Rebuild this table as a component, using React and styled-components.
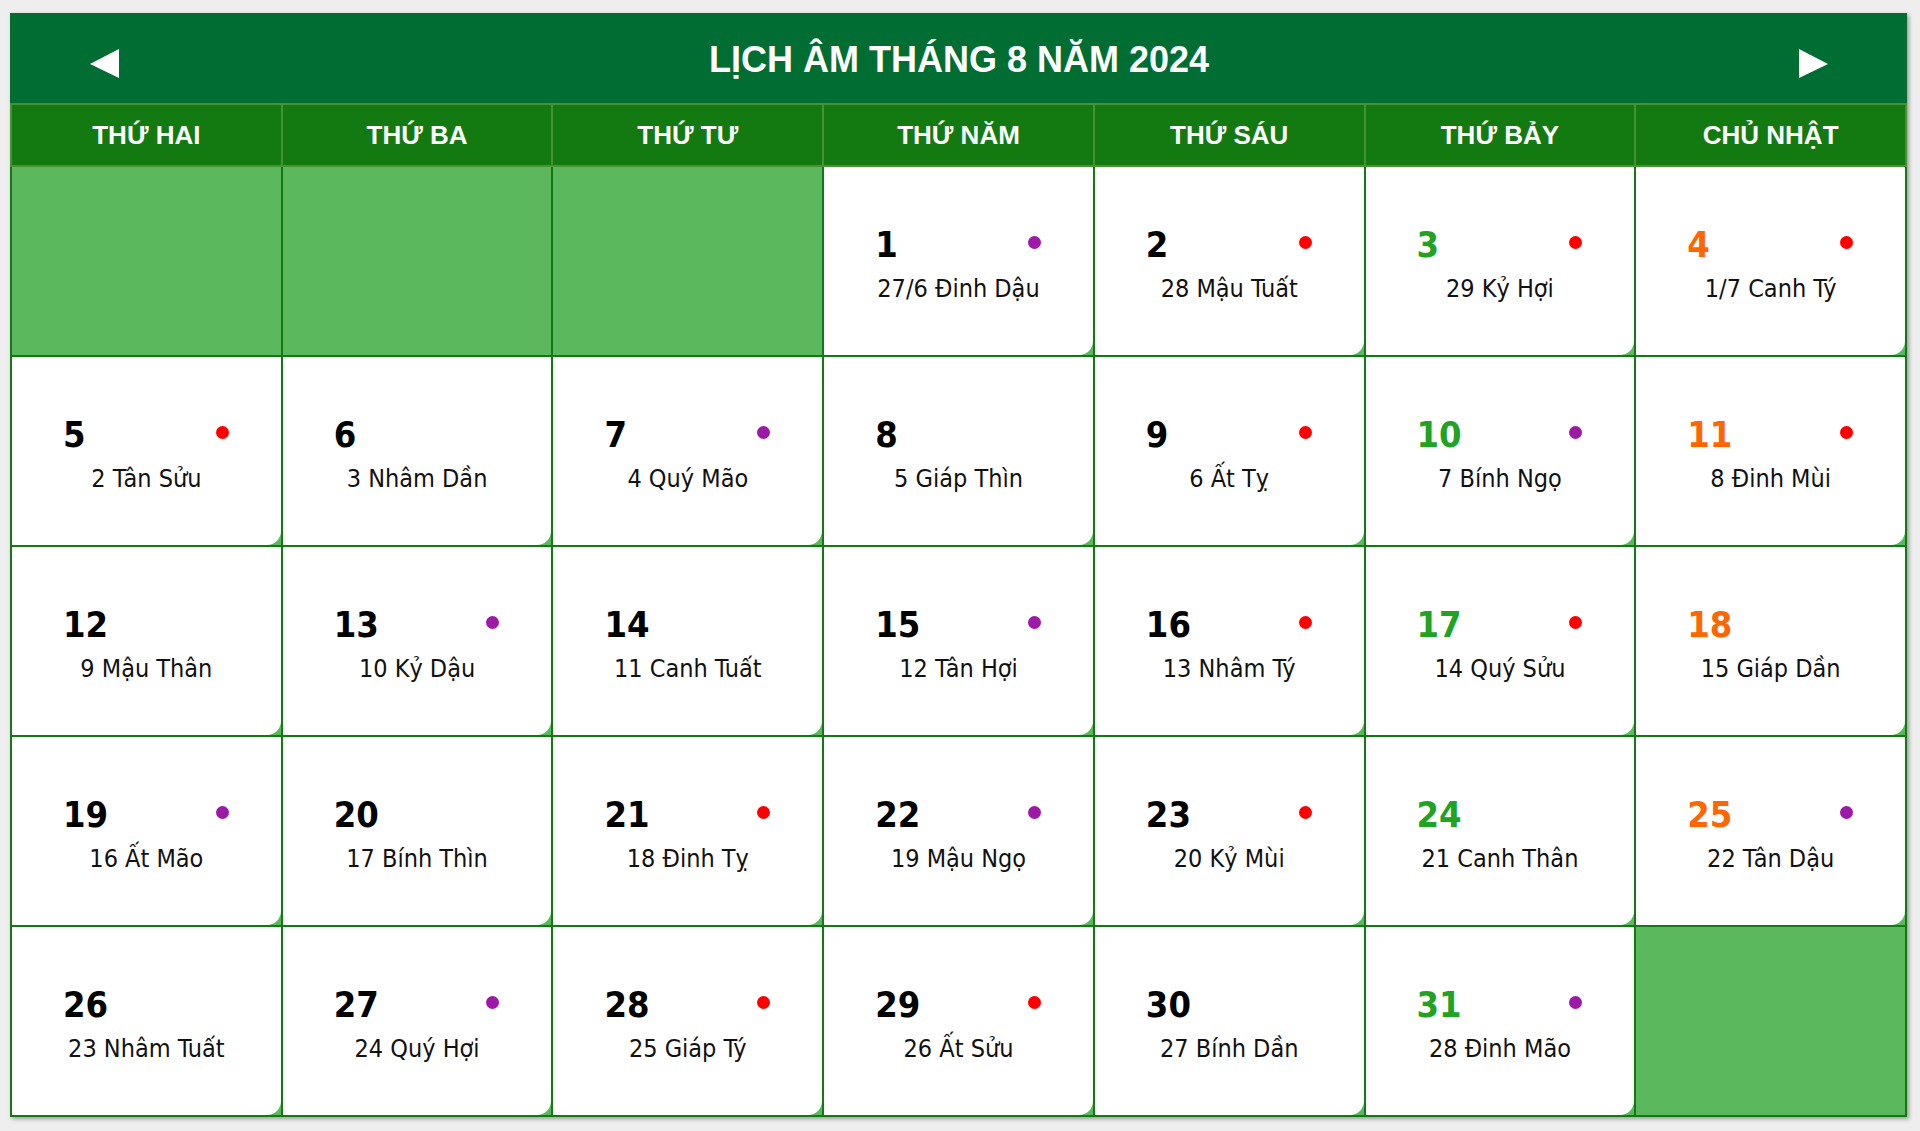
import React from 'react';
import styled, { createGlobalStyle } from 'styled-components';

const GlobalStyle = createGlobalStyle`
  html, body {
    margin: 0;
    padding: 0;
    background: #eeeeee;
  }
`;

const Page = styled.div`
  padding: 13px 0 13px 10px;
`;

const Card = styled.div`
  width: 1897px;
  background: #006d33;
  box-shadow: 2px 2px 4px rgba(0, 0, 0, 0.35);
`;

const Header = styled.div`
  height: 90px;
  display: flex;
  align-items: center;
  padding: 0 79px 0 80px;
  box-sizing: border-box;
`;

const Title = styled.h1`
  flex: 1;
  margin: 0;
  padding-top: 4px;
  text-align: center;
  color: #ffffff;
  font: bold 36px "Liberation Sans", Arial, sans-serif;
`;

const Arrow = styled.button`
  width: 30px;
  height: 30px;
  margin-top: 12px;
  padding: 0;
  border: 0;
  background: none;
  display: flex;
  cursor: pointer;
`;

const WeekRow = styled.div`
  display: grid;
  grid-template-columns: repeat(7, 1fr);
  gap: 2px;
  background: #4a9134;
  border: 2px solid #4a9134;
`;

const WeekDay = styled.div`
  height: 60px;
  background: #137a12;
  color: #ffffff;
  display: flex;
  align-items: center;
  justify-content: center;
  font: bold 26px "Liberation Sans", Arial, sans-serif;
`;

const Days = styled.div`
  display: grid;
  grid-template-columns: repeat(7, 1fr);
  grid-auto-rows: 188px;
  gap: 2px;
  background: #127a12;
  border: 2px solid #127a12;
  border-top: 0;
`;

const Cell = styled.div`
  background: #5cb85c;
  display: flex;
`;

const Inner = styled.div`
  flex: 1;
  background: #ffffff;
  border-bottom-right-radius: 14px;
  display: flex;
  flex-direction: column;
  justify-content: center;
  gap: 6px;
  padding-top: 6px;
`;

const TopLine = styled.div`
  display: flex;
  align-items: center;
  justify-content: space-between;
  padding: 0 52px 0 51px;
`;

const Solar = styled.span`
  font: bold 36px "DejaVu Sans Condensed", "DejaVu Sans", sans-serif;
  font-stretch: condensed;
  line-height: 44px;
  color: ${p => (p.$kind === 'sat' ? '#20a322' : p.$kind === 'sun' ? '#ff6600' : '#000000')};
`;

const Dot = styled.span`
  width: 13px;
  height: 13px;
  border-radius: 50%;
  margin-top: -6px;
  background: ${p => (p.$tone === 'red' ? '#ff0000' : p.$tone === 'purple' ? '#9c1aa6' : 'transparent')};
`;

const Lunar = styled.div`
  text-align: center;
  font: 25px "DejaVu Sans Condensed", "DejaVu Sans", sans-serif;
  font-stretch: condensed;
  line-height: 32px;
  color: #111111;
`;

const weekdays = ['THỨ HAI', 'THỨ BA', 'THỨ TƯ', 'THỨ NĂM', 'THỨ SÁU', 'THỨ BẢY', 'CHỦ NHẬT'];

// [solar day, lunar label, dot colour]
const days = [
  null, null, null,
  [1, '27/6 Đinh Dậu', 'purple'], [2, '28 Mậu Tuất', 'red'], [3, '29 Kỷ Hợi', 'red'], [4, '1/7 Canh Tý', 'red'],
  [5, '2 Tân Sửu', 'red'], [6, '3 Nhâm Dần', ''], [7, '4 Quý Mão', 'purple'], [8, '5 Giáp Thìn', ''],
  [9, '6 Ất Tỵ', 'red'], [10, '7 Bính Ngọ', 'purple'], [11, '8 Đinh Mùi', 'red'],
  [12, '9 Mậu Thân', ''], [13, '10 Kỷ Dậu', 'purple'], [14, '11 Canh Tuất', ''], [15, '12 Tân Hợi', 'purple'],
  [16, '13 Nhâm Tý', 'red'], [17, '14 Quý Sửu', 'red'], [18, '15 Giáp Dần', ''],
  [19, '16 Ất Mão', 'purple'], [20, '17 Bính Thìn', ''], [21, '18 Đinh Tỵ', 'red'], [22, '19 Mậu Ngọ', 'purple'],
  [23, '20 Kỷ Mùi', 'red'], [24, '21 Canh Thân', ''], [25, '22 Tân Dậu', 'purple'],
  [26, '23 Nhâm Tuất', ''], [27, '24 Quý Hợi', 'purple'], [28, '25 Giáp Tý', 'red'], [29, '26 Ất Sửu', 'red'],
  [30, '27 Bính Dần', ''], [31, '28 Đinh Mão', 'purple'], null,
];

const kindOf = i => (i % 7 === 5 ? 'sat' : i % 7 === 6 ? 'sun' : 'week');

export default function App() {
  return (
    <Page>
      <GlobalStyle />
      <Card>
        <Header>
          <Arrow aria-label="Tháng trước">
            <svg width="30" height="30" viewBox="0 0 30 30">
              <polygon points="0,15 29,0 29,29" fill="#ffffff" />
            </svg>
          </Arrow>
          <Title>LỊCH ÂM THÁNG 8 NĂM 2024</Title>
          <Arrow aria-label="Tháng sau">
            <svg width="30" height="30" viewBox="0 0 30 30">
              <polygon points="1,0 30,15 1,29" fill="#ffffff" />
            </svg>
          </Arrow>
        </Header>
        <WeekRow>
          {weekdays.map(w => (
            <WeekDay key={w}>{w}</WeekDay>
          ))}
        </WeekRow>
        <Days>
          {days.map((d, i) => (
            <Cell key={i}>
              {d && (
                <Inner>
                  <TopLine>
                    <Solar $kind={kindOf(i)}>{d[0]}</Solar>
                    <Dot $tone={d[2]} />
                  </TopLine>
                  <Lunar>{d[1]}</Lunar>
                </Inner>
              )}
            </Cell>
          ))}
        </Days>
      </Card>
    </Page>
  );
}
